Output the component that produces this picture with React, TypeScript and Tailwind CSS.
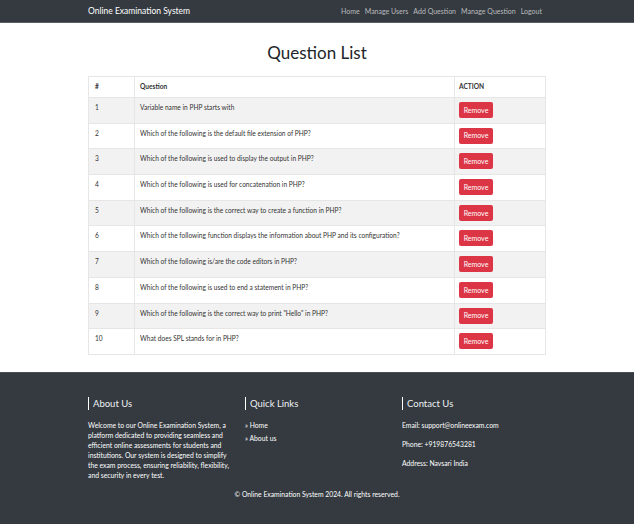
import React from "react";

const questions = [
  "Variable name in PHP starts with",
  "Which of the following is the default file extension of PHP?",
  "Which of the following is used to display the output in PHP?",
  "Which of the following is used for concatenation in PHP?",
  "Which of the following is the correct way to create a function in PHP?",
  "Which of the following function displays the information about PHP and its configuration?",
  "Which of the following is/are the code editors in PHP?",
  "Which of the following is used to end a statement in PHP?",
  'Which of the following is the correct way to print "Hello" in PHP?',
  "What does SPL stands for in PHP?",
];

const navLinks = ["Home", "Manage Users", "Add Question", "Manage Question", "Logout"];

export default function App() {
  return (
    <div className="min-h-[524px] bg-[#343a40] font-['Lato',sans-serif] text-[#212529]">
      {/* navbar */}
      <nav className="h-[23px] bg-[#343a40] border-b border-[#5a5f66]">
        <div className="mx-auto flex h-full w-[458px] items-center justify-between pr-[4px]">
          <span className="text-[8.5px] text-white">Online Examination System</span>
          <ul className="flex gap-[5px] text-[7px] text-[#b9bbbe]">
            {navLinks.map((l) => (
              <li key={l}>{l}</li>
            ))}
          </ul>
        </div>
      </nav>

      <main className="bg-white pb-[17px]">
        <div className="mx-auto w-[458px]">
          <h1 className="pt-[19px] pb-[12px] text-center text-[17px] leading-[22px] font-normal">
            Question List
          </h1>
          <table className="w-full border-collapse border border-[#e6e6e6] text-[6.6px] text-[#333]">
            <thead>
              <tr className="h-[21px]">
                <th className="w-[46px] border border-[#e6e6e6] px-[6px] text-left font-bold">#</th>
                <th className="border border-[#e6e6e6] px-[5px] text-left font-bold">Question</th>
                <th className="w-[91px] border border-[#e6e6e6] px-[4px] text-left font-bold">ACTION</th>
              </tr>
            </thead>
            <tbody>
              {questions.map((q, i) => (
                <tr key={i} className={i % 2 === 0 ? "h-[25.7px] bg-[#f2f2f2]" : "h-[25.7px] bg-white"}>
                  <td className="border-x border-t border-[#e6e6e6] px-[6px] pt-[5px] align-top">
                    {i + 1}
                  </td>
                  <td className="border-x border-t border-[#e6e6e6] px-[5px] pt-[5px] align-top">
                    {q}
                  </td>
                  <td className="border-x border-t border-[#e6e6e6] px-[4px] pt-[4px] pb-[4px] align-top">
                    <button className="h-[16px] w-[34px] rounded-[2px] bg-[#dc3545] text-[7px] text-white">
                      Remove
                    </button>
                  </td>
                </tr>
              ))}
            </tbody>
          </table>
        </div>
      </main>

      <footer className="bg-[#343a40] border-t border-[#4a4f55] pt-[24px] pb-[25px] text-white">
        <div className="mx-auto grid w-[458px] grid-cols-[157px_157px_1fr]">
          <div className="pr-[14px]">
            <h5 className="mb-[10px] border-l border-white pl-[4px] text-[9.5px] leading-[13px] text-[#eef0f2]">About Us</h5>
            <p className="text-[6.8px] leading-[10px] text-white">
              Welcome to our Online Examination System, a platform dedicated to providing seamless and
              efficient online assessments for students and institutions. Our system is designed to simplify
              the exam process, ensuring reliability, flexibility, and security in every test.
            </p>
          </div>
          <div>
            <h5 className="mb-[10px] border-l border-white pl-[4px] text-[9.5px] leading-[13px] text-[#eef0f2]">Quick Links</h5>
            <ul className="flex flex-col gap-[3px] text-[6.8px] leading-[10px] text-white">
              <li>» Home</li>
              <li>» About us</li>
            </ul>
          </div>
          <div>
            <h5 className="mb-[10px] border-l border-white pl-[4px] text-[9.5px] leading-[13px] text-[#eef0f2]">Contact Us</h5>
            <div className="flex flex-col gap-[9px] text-[6.8px] leading-[10px] text-white">
              <p>Email: support@onlineexam.com</p>
              <p>Phone: +919876543281</p>
              <p>Address: Navsari India</p>
            </div>
          </div>
        </div>
        <p className="mt-[9px] text-center text-[6.8px] leading-[10px] text-white">
          © Online Examination System 2024. All rights reserved.
        </p>
      </footer>
    </div>
  );
}
